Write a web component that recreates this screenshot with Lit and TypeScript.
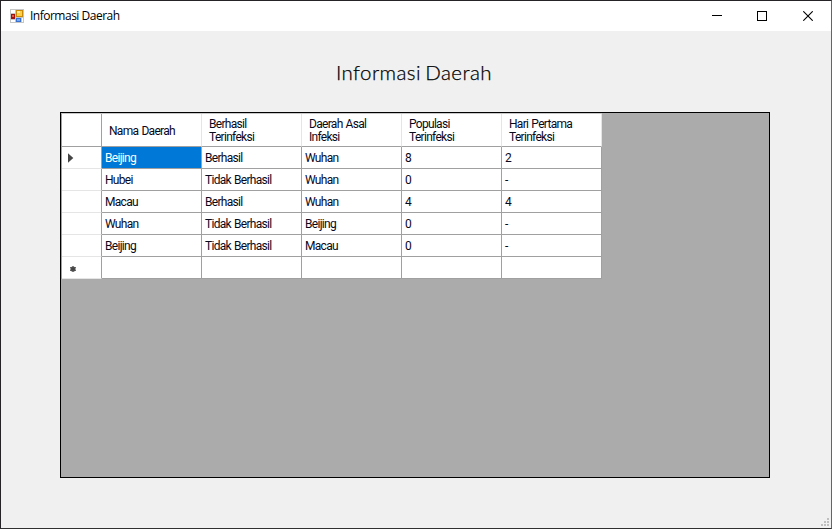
import { LitElement, html, css } from "lit";
import { customElement } from "lit/decorators.js";
import { classMap } from "lit/directives/class-map.js";

const HEADERS = [
  ["Nama Daerah"],
  ["Berhasil", "Terinfeksi"],
  ["Daerah Asal", "Infeksi"],
  ["Populasi", "Terinfeksi"],
  ["Hari Pertama", "Terinfeksi"],
];

const ROWS = [
  ["Beijing", "Berhasil", "Wuhan", "8", "2"],
  ["Hubei", "Tidak Berhasil", "Wuhan", "0", "-"],
  ["Macau", "Berhasil", "Wuhan", "4", "4"],
  ["Wuhan", "Tidak Berhasil", "Beijing", "0", "-"],
  ["Beijing", "Tidak Berhasil", "Macau", "0", "-"],
  ["", "", "", "", ""],
];

@customElement("title-bar")
class TitleBar extends LitElement {
  static styles = css`
    :host {
      display: flex;
      height: 30px;
      background: #fff;
      align-items: center;
      color: #000;
    }
    .logo {
      margin: 0 6px 0 9px;
      flex: none;
    }
    .caption {
      flex: 1;
      font: 12px/16px "Open Sans", sans-serif;
      letter-spacing: -0.5px;
      white-space: nowrap;
    }
    .buttons {
      display: flex;
      gap: 35px;
      padding-right: 18px;
    }
    .buttons svg:last-child {
      margin-left: 1px;
    }
    svg {
      display: block;
    }
  `;
  render() {
    return html`
      <svg class="logo" width="14" height="14" viewBox="0 0 14 14" shape-rendering="crispEdges">
        <rect width="14" height="14" fill="#c6c6c6" />
        <rect x="1" y="1" width="4" height="3" fill="#fff" />
        <rect x="1" y="11" width="4" height="2" fill="#fff" />
        <rect x="12" y="9" width="1" height="4" fill="#fff" />
        <rect x="1" y="5" width="4" height="5" fill="#a01010" />
        <rect x="2" y="6" width="2" height="2" fill="#e05a48" />
        <rect x="6" y="1" width="7" height="7" fill="#c98a08" />
        <rect x="7" y="2" width="5" height="5" fill="#ffcf45" />
        <rect x="7" y="2" width="3" height="2" fill="#ffe9a0" />
        <rect x="6" y="9" width="5" height="4" fill="#3871cf" />
        <rect x="7" y="10" width="3" height="2" fill="#75a9f5" />
      </svg>
      <span class="caption">Informasi Daerah</span>
      <div class="buttons">
        <svg width="10" height="10"><path d="M0 4.5H10" stroke="#000" /></svg>
        <svg width="10" height="10"><rect x=".5" y=".5" width="9" height="9" fill="none" stroke="#000" /></svg>
        <svg width="10" height="10"><path d="M.3 .3L9.7 9.7M9.7 .3L.3 9.7" stroke="#000" stroke-width="1.1" /></svg>
      </div>
    `;
  }
}

@customElement("data-grid")
class DataGrid extends LitElement {
  static styles = css`
    :host {
      display: block;
      box-sizing: border-box;
      width: 710px;
      height: 366px;
      border: 1px solid #000;
      background: #ababab;
      font: 12px/13px "Roboto", sans-serif;
      letter-spacing: -0.7px;
      word-spacing: 0.8px;
      color: #08081c;
    }
    .row {
      display: grid;
      width: 541px;
      height: 22px;
      grid-template-columns: 40px repeat(5, 100px);
      background: #fff;
      box-sizing: border-box;
      border-left: 1px solid #a0a0a0;
    }
    .head {
      height: 34px;
      border-top: 1px solid #c8c8c8;
    }
    .row > div {
      box-sizing: border-box;
      border-right: 1px solid #a0a0a0;
      border-bottom: 1px solid #a0a0a0;
      display: flex;
      flex-direction: column;
      justify-content: center;
      white-space: nowrap;
      padding: 1px 0 0 3px;
    }
    .row > div.marker {
      border-bottom-color: #e5e5e5;
      padding: 1px 0 0 6px;
    }
    .head > div.marker {
      border-bottom-color: #a0a0a0;
    }
    .head > div.title {
      border-right-color: #e5e5e5;
      padding: 2px 0 0 7px;
    }
    .row > div.selected {
      background: #0078d7;
      color: #fff;
    }
    svg {
      display: block;
    }
  `;
  marker(i: number) {
    if (i === 0) return html`<svg width="6" height="10"><path d="M0 .3V9.7L5.3 5Z" fill="#444" /></svg>`;
    if (i === ROWS.length - 1)
      return html`<svg width="9" height="8"><circle cx="5" cy="5" r="2.6" fill="#555" /><path d="M5 2V8M2.2 3.4L7.8 6.6M7.8 3.4L2.2 6.6" stroke="#444" /></svg>`;
    return "";
  }
  render() {
    return html`
      <div class="row head">
        <div class="marker"></div>
        ${HEADERS.map((h) => html`<div class="title">${h.map((t) => html`<span>${t}</span>`)}</div>`)}
      </div>
      ${ROWS.map(
        (r, i) => html`<div class="row">
          <div class="marker">${this.marker(i)}</div>
          ${r.map((t, j) => html`<div class=${classMap({ selected: i === 0 && j === 0 })}>${t}</div>`)}
        </div>`
      )}
    `;
  }
}

@customElement("app-root")
class AppRoot extends LitElement {
  static styles = css`
    :host {
      display: flex;
      flex-direction: column;
      box-sizing: border-box;
      width: 832px;
      height: 529px;
      border: 1px solid #252326;
      border-right-color: #656565;
      border-bottom-color: #303030;
      background: #f0f0f0;
      overflow: hidden;
    }
    main {
      flex: 1;
      display: flex;
      flex-direction: column;
      padding-left: 59px;
    }
    h1 {
      margin: 29px 0 0 276px;
      height: 24px;
      font: 300 20.5px/24px "Lato", sans-serif;
      letter-spacing: 0.4px;
      word-spacing: -1.5px;
      -webkit-text-stroke: 0.25px #000;
      color: #000;
      white-space: nowrap;
    }
    data-grid {
      margin-top: 28px;
    }
    .grip {
      align-self: flex-end;
      margin: auto 2px 2px 0;
    }
  `;
  render() {
    return html`
      <title-bar></title-bar>
      <main>
        <h1>Informasi Daerah</h1>
        <data-grid></data-grid>
        <svg class="grip" width="8" height="8" fill="#bfbfbf" shape-rendering="crispEdges">
          <path d="M6 0h2v2h-2zM3 3h2v2h-2zM6 3h2v2h-2zM0 6h2v2h-2zM3 6h2v2h-2zM6 6h2v2h-2z" />
        </svg>
      </main>
    `;
  }
}
